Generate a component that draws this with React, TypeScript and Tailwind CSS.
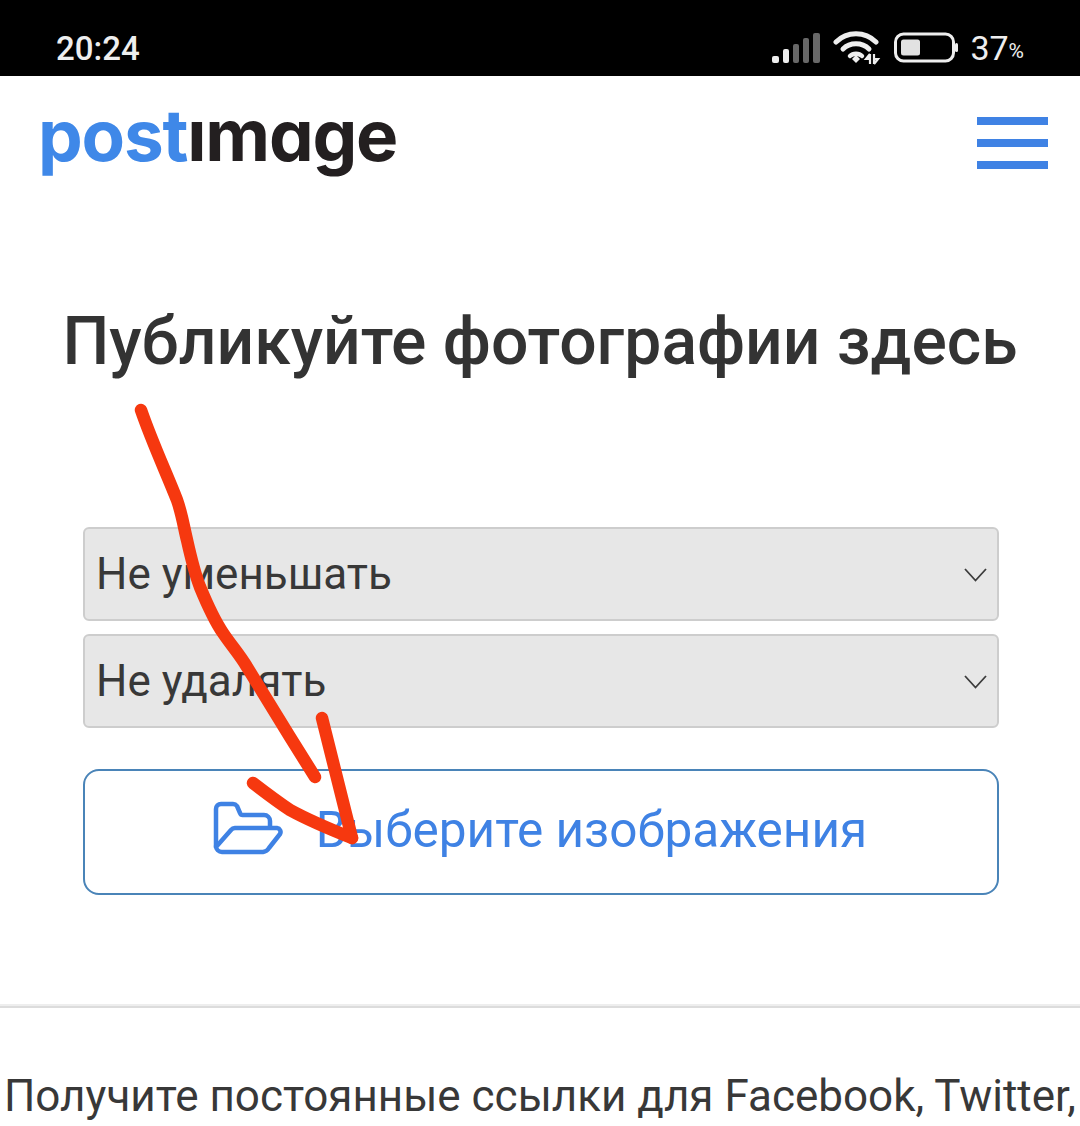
const Chevron = () => (
  <svg width="23" height="14" viewBox="0 0 23 14" fill="none" className="mt-[2px] shrink-0">
    <path d="M1 1 L11.5 12.5 L22 1" stroke="#3c3c3c" strokeWidth="1.8" />
  </svg>
);

const FolderIcon = () => (
  <svg width="71" height="54" viewBox="0 0 71 54" fill="none" stroke="#3f82e4" strokeWidth="4.5" strokeLinejoin="round" strokeLinecap="round" className="mb-[8px] shrink-0">
    <path d="M3 45 V8 a5 5 0 0 1 5-5 H20 a5 5 0 0 1 4 2 l3 7 a3 3 0 0 0 3 2 H51 a6 6 0 0 1 6 6 V26" />
    <path d="M3 46 L18 29 a6 6 0 0 1 4-2 H64 a4 4 0 0 1 3 6 L56 47 a8 8 0 0 1-6 4 H9 a6 6 0 0 1-6-6" />
  </svg>
);

const Select = ({ label }: { label: string }) => (
  <div className="flex h-[94px] items-center justify-between rounded-[6px] border-2 border-[#cdcdcd] bg-[#e7e7e7] pl-[11px] pr-[10px]">
    <span className="text-[44px] leading-none text-[#383838]">{label}</span>
    <Chevron />
  </div>
);

export default function App() {
  return (
    <div className="relative h-[1126px] w-[1080px] overflow-hidden bg-white font-['Roboto',sans-serif]">
      <div className="flex h-[76px] items-center justify-between bg-black pl-[56px] pr-[56px] pt-[20px] text-[#eeeeee]">
        <span className="text-[33px] font-medium leading-none">20:24</span>
        <div className="flex items-center">
          <svg width="48" height="32" viewBox="0 0 48 32" className="mr-[13px]">
            <rect x="0" y="24" width="7" height="7" rx="2" fill="#eeeeee" />
            <rect x="11" y="17" width="6" height="14" rx="2" fill="#eeeeee" />
            <rect x="21" y="12" width="6" height="19" rx="2" fill="#686868" />
            <rect x="31" y="6" width="6" height="25" rx="2" fill="#686868" />
            <rect x="41" y="1" width="7" height="30" rx="2" fill="#686868" />
          </svg>
          <svg width="48" height="36" viewBox="0 0 48 36" fill="none" className="mr-[13px]">
            <path d="M3 12 C14 1 32 1 43 12" stroke="#eeeeee" strokeWidth="5" strokeLinecap="round" />
            <path d="M10 19 C17 12 29 12 36 19" stroke="#eeeeee" strokeWidth="5" strokeLinecap="round" />
            <path d="M17 26 C20 23 26 23 29 26" stroke="#eeeeee" strokeWidth="4.5" strokeLinecap="round" />
            <path d="M19 29 L23 25 L27 29 L23 33 Z" fill="#eeeeee" />
            <path d="M37 24 V34 M37 24 L33 29 H37 M41 24 V34 M41 34 L45 29 H41" stroke="#eeeeee" strokeWidth="2.2" />
          </svg>
          <svg width="64" height="32" viewBox="0 0 64 32" fill="none" className="mr-[12px]">
            <rect x="1.5" y="2" width="58" height="27" rx="8" stroke="#eeeeee" strokeWidth="3" />
            <rect x="7" y="7.5" width="19" height="16" rx="2.5" fill="#e2e2e2" />
            <rect x="61" y="11" width="3" height="9" rx="1.5" fill="#eeeeee" />
          </svg>
          <span className="text-[34px] leading-none">37</span>
          <span className="mt-[6px] text-[21px] leading-none">%</span>
        </div>
      </div>

      <header className="flex h-[130px] items-start justify-between pl-[38px] pr-[32px]">
        <div className="mt-[24px] flex h-[70px] items-center font-['Inter',sans-serif] text-[71px] font-bold leading-none tracking-[-1.2px]">
          <span className="text-[#3f88e8]">post</span>
          <span className="text-[#231f20]">ımɑge</span>
        </div>
        <div className="mt-[41px] flex w-[71px] flex-col gap-[14px]">
          <div className="h-[8px] bg-[#3f82e4]" />
          <div className="h-[8px] bg-[#3f82e4]" />
          <div className="h-[8px] bg-[#3f82e4]" />
        </div>
      </header>

      <h1 className="mt-[100px] whitespace-nowrap text-center text-[66px] font-medium leading-[72px] text-[#333333]">
        Публикуйте фотографии здесь
      </h1>

      <div className="mx-[83px] mt-[149px] flex w-[916px] flex-col gap-[13px]">
        <Select label="Не уменьшать" />
        <Select label="Не удалять" />
        <div className="mt-[28px] flex h-[126px] items-center justify-center gap-[32px] rounded-[16px] border-2 border-[#4a84b8] pr-[2px]">
          <FolderIcon />
          <span className="mb-[2px] text-[49.5px] leading-none text-[#3f82e4]">Выберите изображения</span>
        </div>
      </div>

      <div className="mt-[109px] h-[4px] border-y-2 border-t-[#eeeeee] border-b-[#dcdcdc]" />

      <p className="mt-[64px] whitespace-nowrap text-center text-[44px] leading-[48px] text-[#383838]">
        Получите постоянные ссылки для Facebook, Twitter,
      </p>

      <svg width="1080" height="1126" viewBox="0 0 1080 1126" fill="none" className="pointer-events-none absolute left-0 top-0">
        <g stroke="#f6380f" strokeWidth="12.5" strokeLinecap="round" strokeLinejoin="round">
          <path d="M141 410 C152 442 166 472 177 500 C182 514 184 528 187 540 C191 558 195 574 200 587 C207 604 214 620 223 633 C231 645 240 655 247 667 L290 737 L315 777" />
          <path d="M322 718 L352 838" />
          <path d="M253 783 C266 793 278 802 290 810 C310 821 332 830 352 838" />
        </g>
      </svg>
    </div>
  );
}
